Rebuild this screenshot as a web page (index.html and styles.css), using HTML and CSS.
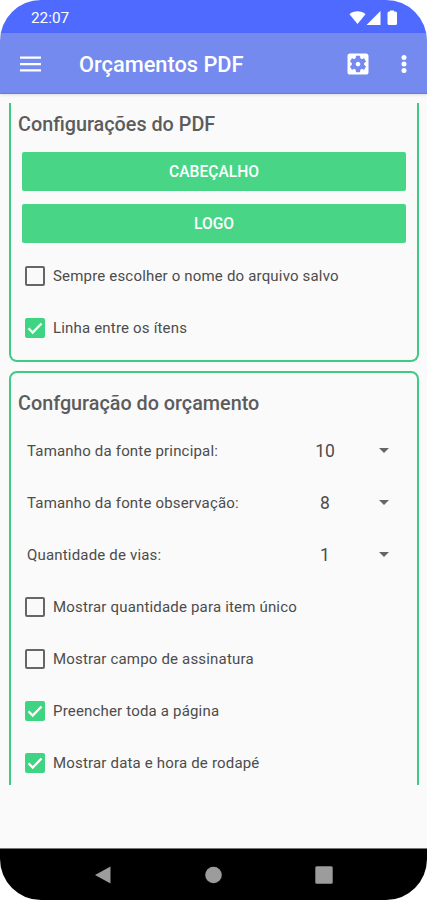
FILE: index.html
```html
<!DOCTYPE html>
<html lang="pt-BR">
<head>
    <meta charset="UTF-8">
    <meta name="viewport" content="width=device-width, initial-scale=1.0">
    <title>Orçamentos PDF</title>
    <link rel="stylesheet" href="styles.css">
</head>
<body>
    <div class="phone">
        <div class="status-bar">
            <span class="clock">22:07</span>
            <svg class="status-icons" width="50" height="16" viewBox="0 0 50 16">
                <path d="M0.5 4.2C5 0.4 12 0.4 16.5 4.2L8.5 14Z"/>
                <path d="M31.500 1V15H17.500Z"/>
                <path d="M41 1.500V0.500h4V1.500h1.500q1.500 0 1.500 1.500V13.500q0 1.500-1.500 1.500h-6.500q-1.500 0-1.500-1.500V3q0-1.500 1.500-1.500Z"/>
            </svg>
        </div>

        <header class="app-bar">
            <svg class="menu-icon" width="21" height="16" viewBox="0 0 21 16">
                <path d="M0 0.500h21v2.300H0zM0 6.900h21v2.300H0zM0 13.200h21v2.300H0z"/>
            </svg>
            <h1>Orçamentos PDF</h1>
            <svg class="settings-icon" width="28" height="28" viewBox="0 0 24 24">
                <path d="M12 10c-1.100 0-2 .9-2 2s.9 2 2 2 2-.9 2-2-.9-2-2-2zm7-7H5c-1.110 0-2 .9-2 2v14c0 1.100.89 2 2 2h14c1.110 0 2-.9 2-2V5c0-1.100-.89-2-2-2zm-1.750 9c0 .23-.02.46-.05.68l1.480 1.160c.13.11.17.3.08.45l-1.400 2.420c-.09.15-.27.21-.43.15l-1.740-.7c-.36.28-.76.51-1.180.69l-.26 1.850c-.03.17-.18.3-.35.3h-2.800c-.17 0-.32-.13-.35-.29l-.26-1.850c-.43-.18-.82-.41-1.180-.69l-1.740.7c-.16.06-.34 0-.43-.15l-1.400-2.420c-.09-.15-.05-.34.08-.45l1.480-1.160c-.03-.23-.05-.46-.05-.69s.02-.46.05-.68l-1.480-1.160c-.13-.11-.17-.3-.08-.45l1.400-2.420c.09-.15.27-.21.43-.15l1.740.7c.36-.28.76-.51 1.180-.69l.26-1.850c.03-.17.18-.3.35-.3h2.800c.17 0 .32.13.35.29l.26 1.850c.43.18.82.41 1.180.69l1.740-.7c.16-.06.34 0 .43.15l1.400 2.420c.09.15.05.34-.08.45l-1.480 1.160c.03.23.05.46.05.69z"/>
            </svg>
            <svg class="more-icon" width="6" height="18" viewBox="0 0 6 18">
                <circle cx="3" cy="2.500" r="2.500"/>
                <circle cx="3" cy="9" r="2.500"/>
                <circle cx="3" cy="15.500" r="2.500"/>
            </svg>
        </header>

        <main class="content">
            <div class="scroll">
                <section class="card card-pdf">
                    <h2>Configurações do PDF</h2>
                    <button class="btn">CABEÇALHO</button>
                    <button class="btn">LOGO</button>
                    <div class="row">
                        <span class="check"></span>
                        <span class="label">Sempre escolher o nome do arquivo salvo</span>
                    </div>
                    <div class="row">
                        <span class="check checked"><svg width="20" height="20" viewBox="0 0 20 20"><path d="M3.500 10.300L7.700 14.500L16.500 5.500"/></svg></span>
                        <span class="label">Linha entre os ítens</span>
                    </div>
                </section>

                <section class="card card-orcamento">
                    <h2>Confguração do orçamento</h2>
                    <div class="row select">
                        <span class="label">Tamanho da fonte principal:</span>
                        <span class="value">10</span>
                        <span class="arrow"></span>
                    </div>
                    <div class="row select">
                        <span class="label">Tamanho da fonte observação:</span>
                        <span class="value">8</span>
                        <span class="arrow"></span>
                    </div>
                    <div class="row select">
                        <span class="label">Quantidade de vias:</span>
                        <span class="value">1</span>
                        <span class="arrow"></span>
                    </div>
                    <div class="row">
                        <span class="check"></span>
                        <span class="label">Mostrar quantidade para item único</span>
                    </div>
                    <div class="row">
                        <span class="check"></span>
                        <span class="label">Mostrar campo de assinatura</span>
                    </div>
                    <div class="row">
                        <span class="check checked"><svg width="20" height="20" viewBox="0 0 20 20"><path d="M3.500 10.300L7.700 14.500L16.500 5.500"/></svg></span>
                        <span class="label">Preencher toda a página</span>
                    </div>
                    <div class="row">
                        <span class="check checked"><svg width="20" height="20" viewBox="0 0 20 20"><path d="M3.500 10.300L7.700 14.500L16.500 5.500"/></svg></span>
                        <span class="label">Mostrar data e hora de rodapé</span>
                    </div>
                </section>
            </div>
        </main>

        <nav class="nav-bar">
            <svg width="17" height="18" viewBox="0 0 17 18"><path d="M16.500 0.500V17.500L1 9Z"/></svg>
            <svg width="17" height="18" viewBox="0 0 17 18"><circle cx="8.500" cy="9" r="8.300"/></svg>
            <svg width="18" height="18" viewBox="0 0 18 18"><rect x="0.300" y="0.300" width="17.400" height="17.400" rx="1.500"/></svg>
        </nav>
    </div>
</body>
</html>
```
FILE: styles.css
```css
body {
    margin: 0;
    background: #fff;
    font-family: Roboto, "Liberation Sans", sans-serif;
}
.phone {
    width: 427px;
    height: 900px;
    display: flex;
    flex-direction: column;
    border-radius: 41px;
    overflow: hidden;
    background: #fafafa;
}
.status-bar {
    height: 33px;
    box-sizing: border-box;
    padding: 2px 28px 0 31px;
    display: flex;
    align-items: center;
    justify-content: space-between;
    background: #4f6bff;
    color: #fff;
}
.clock {
    font-size: 15.3px;
}
.status-icons {
    fill: #fff;
}
.app-bar {
    height: 61px;
    box-sizing: border-box;
    padding: 1px 20px 0 20px;
    display: flex;
    align-items: center;
    background: #748aee;
    border-bottom: 1px solid #667be0;
    box-shadow: 0 1px 3px rgba(0, 0, 0, 0.12);
}
.app-bar svg {
    fill: #fff;
}
h1 {
    flex: 1;
    margin: 2px 0 0 38px;
    font-size: 21.8px;
    font-weight: 500;
    color: #fff;
}
.more-icon {
    margin-left: 29px;
}
.content {
    flex: 1;
    padding: 9px 8px 0 9px;
}
/* área visível da lista */
.scroll {
    height: 682px;
    overflow: hidden;
}
.card {
    box-sizing: border-box;
    border: 2px solid #3fcb86;
    padding: 0 11px;
}
.card-pdf {
    height: 259px;
    border-top: none;
    border-radius: 0 0 8px 8px;
    margin-bottom: 9px;
}
.card-orcamento {
    height: 440px;
    border-radius: 8px;
}
h2 {
    margin: 0 0 0 -4px;
    font-size: 19.8px;
    font-weight: 500;
    color: #5c5c5c;
    line-height: 43px;
}
.card-orcamento h2 {
    line-height: 61px;
    height: 52px;
}
.btn {
    display: block;
    width: 384px;
    height: 39.5px;
    margin: 5.5px 0 12.5px;
    padding: 2px 0 0;
    border: none;
    border-radius: 2px;
    background: #48d686;
    color: #fff;
    font-family: inherit;
    font-size: 15.6px;
    font-weight: 500;
}
.btn + .row {
    margin-top: -6px;
}
.row {
    height: 52px;
    padding: 0 3px;
    display: flex;
    align-items: center;
}
.check {
    width: 20px;
    height: 20px;
    box-sizing: border-box;
    border: 2px solid #666;
    border-radius: 2px;
    margin-right: 8px;
}
.checked {
    border: none;
    background: #3fd482;
}
.checked svg {
    display: block;
    fill: none;
    stroke: #fff;
    stroke-width: 2.3;
}
.label {
    font-size: 15px;
    letter-spacing: 0.18px;
    color: #4c4c4c;
    white-space: nowrap;
}
.select {
    padding: 0 17px 0 5px;
}
.select .label {
    flex: 1;
}
.value {
    width: 40px;
    text-align: center;
    font-size: 17.5px;
    color: #4c4c4c;
}
.arrow {
    margin: -2px 0 0 34px;
    border: 5px solid transparent;
    border-top-color: #666;
    border-bottom: none;
}
.nav-bar {
    height: 52px;
    box-sizing: border-box;
    padding: 0 94px 0 94px;
    border-top: 1px solid #777;
    display: flex;
    align-items: center;
    justify-content: space-between;
    background: #000;
}
.nav-bar svg {
    fill: #9c9c9c;
}
```
